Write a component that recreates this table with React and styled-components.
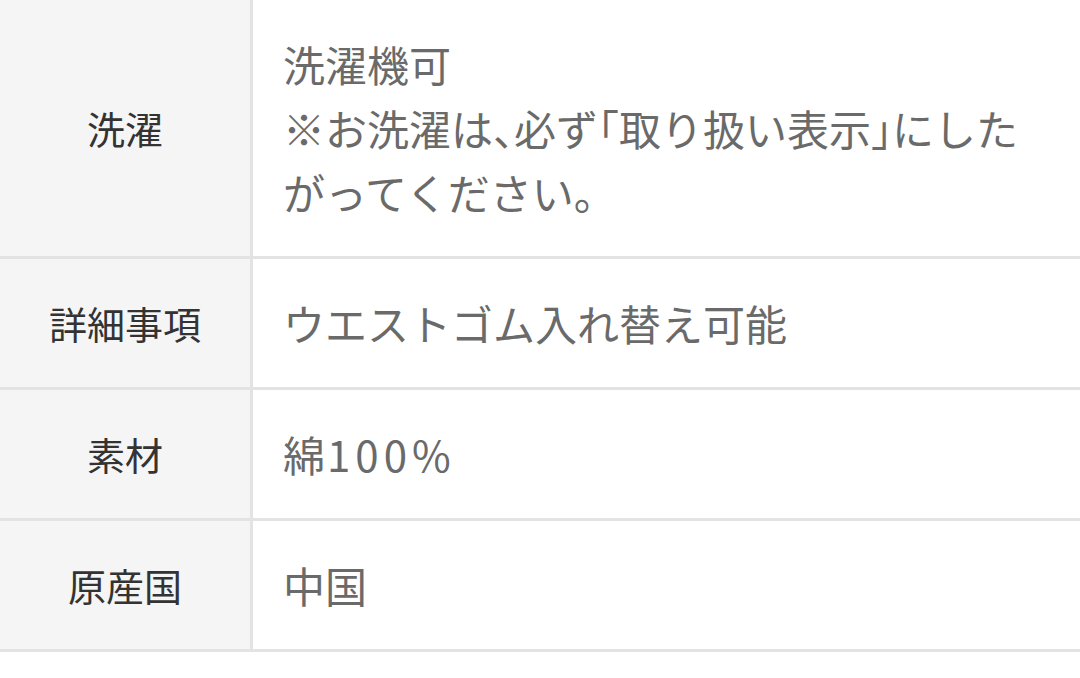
import React from 'react'
import styled, { createGlobalStyle } from 'styled-components'

const GlobalStyle = createGlobalStyle`
  html, body {
    margin: 0;
    padding: 0;
    background: #fff;
  }
  body {
    font-family: "Noto Sans CJK JP", "Noto Sans", sans-serif;
  }
`

const rows = [
  { label: '洗濯', value: ['洗濯機可', '※お洗濯は、必ず「取り扱い表示」にした', 'がってください。'] },
  { label: '詳細事項', value: ['ウエストゴム入れ替え可能'] },
  { label: '素材', value: [<>綿<Digits>100%</Digits></>] },
  { label: '原産国', value: ['中国'] },
]

export default function App() {
  return (
    <>
      <GlobalStyle />
      <Table>
        {rows.map((r) => (
          <Row key={r.label}>
            <Label>{r.label}</Label>
            <Value>
              {r.value.map((line, i) => (
                <Line key={i}>{line}</Line>
              ))}
            </Value>
          </Row>
        ))}
      </Table>
    </>
  )
}

const Table = styled.div`
  width: 1080px;
  display: flex;
  flex-direction: column;
`

const Row = styled.div`
  display: grid;
  grid-template-columns: 253px 1fr;
  border-bottom: 3px solid #e3e3e3;
`

const Label = styled.div`
  display: flex;
  align-items: center;
  justify-content: center;
  background: #f5f5f5;
  border-right: 3px solid #e3e3e3;
  color: #333;
  font-size: 38px;
  line-height: 64px;
`

const Value = styled.div`
  padding: 32px 30px;
  color: #6a6a6a;
  font-size: 42px;
  line-height: 64px;
  font-feature-settings: "halt";
`

const Line = styled.div`
  white-space: nowrap;
`

function Digits({ children }) {
  return <DigitSpan>{children}</DigitSpan>
}

const DigitSpan = styled.span`
  letter-spacing: 5px;
  margin-left: 2px;
`
